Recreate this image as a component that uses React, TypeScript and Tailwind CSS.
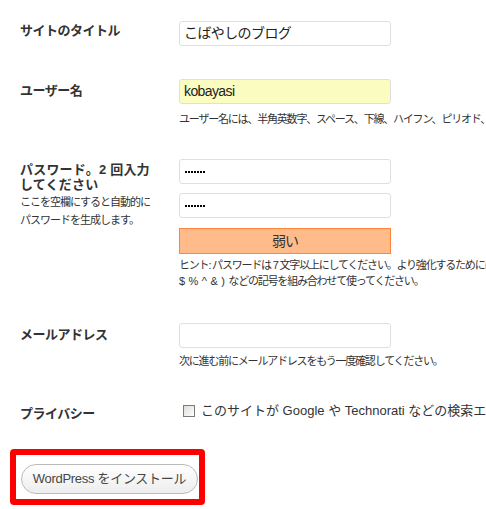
import type { ReactNode } from "react";

// WordPress install form: site title, user, password, email, privacy,
// and the install button boxed in red.

const font = "font-['Liberation_Sans','Noto_Sans_CJK_JP',sans-serif]";

function Row({ label, className = "", children }: { label: ReactNode; className?: string; children: ReactNode }) {
  return (
    <div className={`flex ${className}`}>
      <div className="w-[159px] shrink-0">{label}</div>
      <div className="w-[212px] shrink-0">{children}</div>
    </div>
  );
}

function Label({ children }: { children: ReactNode }) {
  return <div className="pt-[2px] text-[13px] leading-[16px] font-bold tracking-[-0.5px] text-[#333]">{children}</div>;
}

function Field({ children, yellow = false, className = "" }: { children?: ReactNode; yellow?: boolean; className?: string }) {
  return (
    <div
      className={`flex h-[25px] w-[212px] items-center rounded-[3px] border border-[#dfdfdf] px-[4px] text-[14px] tracking-[-0.6px] text-[#222] ${
        yellow ? "bg-[#fbfdc0]" : "bg-white"
      } ${className}`}
    >
      {children}
    </div>
  );
}

function Dots() {
  return (
    <div className="flex gap-[1px] pl-[1px]">
      {Array.from({ length: 7 }).map((_, i) => (
        <div key={i} className="h-[2px] w-[2px] bg-black" />
      ))}
    </div>
  );
}

function Help({ children, className = "" }: { children: ReactNode; className?: string }) {
  return (
    <div className={`whitespace-nowrap text-[11px] tracking-[-1.2px] text-[#333] ${className}`}>{children}</div>
  );
}

export default function App() {
  return (
    <div className={`h-[509px] w-[486px] overflow-hidden bg-white ${font}`}>
      <div className="pl-[20px] pt-[21px]">
        <Row label={<Label>サイトのタイトル</Label>}>
          <Field>こばやしのブログ</Field>
        </Row>

        <Row className="mt-[33px]" label={<div className="pt-[2px]"><Label>ユーザー名</Label></div>}>
          <Field yellow>kobayasi</Field>
          <Help className="mt-[6px] leading-[18px]">
            ユーザー名には、半角英数字、スペース、下線、ハイフン、ピリオド、@ 記号のみが使えます。
          </Help>
        </Row>

        <Row
          className="mt-[31px]"
          label={
            <div className="pt-[3px]">
              <div className="text-[13px] leading-[15px] font-bold tracking-[0.2px] text-[#333]">
                パスワード。2 回入力
                <br />
                してください
              </div>
              <div className="mt-[1px] text-[11px] leading-[18px] tracking-[-1px] text-[#333]">
                ここを空欄にすると自動的に
                <br />
                パスワードを生成します。
              </div>
            </div>
          }
        >
          <Field>
            <Dots />
          </Field>
          <Field className="mt-[9px]">
            <Dots />
          </Field>
          <div className="mt-[10px] h-[26px] w-[212px] border border-[#ff853c] bg-[#ffbb89] text-center text-[14px] leading-[24px] tracking-[-1px] text-[#333]">
            弱い
          </div>
          <Help className="mt-[3px] leading-[16px]">
            ヒント: パスワードは 7 文字以上にしてください。より強化するためには大文字と小文字、数字、記号 ( ! " ? $ % ^ &amp; )
          </Help>
          <Help className="leading-[16px]">
            <span className="tracking-[0.2px]">$ % ^ &amp; ) </span>などの記号を組み合わせて使ってください。
          </Help>
        </Row>

        <Row className="mt-[34px]" label={<div className="pt-[2px]"><Label>メールアドレス</Label></div>}>
          <Field />
          <Help className="mt-[4px] leading-[18px]">次に進む前にメールアドレスをもう一度確認してください。</Help>
        </Row>

        <Row className="mt-[33px]" label={<div className="pt-[1px]"><Label>プライバシー</Label></div>}>
          <div className="flex h-[16px] items-center whitespace-nowrap">
            <div className="ml-[4px] h-[12px] w-[12px] shrink-0 border border-[#7a7a7a] bg-gradient-to-br from-[#dcdcd7] to-white" />
            <span className="ml-[6px] text-[13px] tracking-[0px] text-[#333]">
              このサイトが Google や Technorati などの検索エンジンに表示されるのを許可する。
            </span>
          </div>
        </Row>
      </div>

      <div className="ml-[10px] mt-[27px] h-[56px] w-[195px] rounded-[4px] border-[6px] border-[#ff0000] pl-[5px] pt-[9px]">
        <button className="flex h-[30px] w-[177px] items-center justify-center rounded-full border border-[#bbb] bg-gradient-to-b from-white to-[#ededed] text-[13px] tracking-[-0.3px] text-[#464646]">
          WordPress をインストール
        </button>
      </div>
    </div>
  );
}
